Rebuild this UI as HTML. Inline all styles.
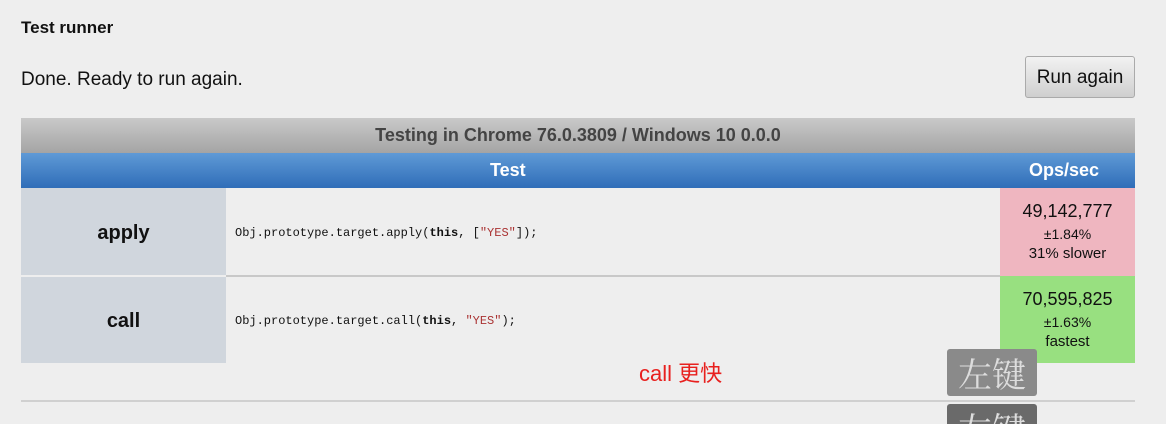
<!DOCTYPE html><html><head><meta charset="utf-8"><style>
html{overflow:hidden;height:424px}
body{margin:0;width:1166px;height:424px;background:#eeeeee;font-family:"Liberation Sans","Noto Sans CJK SC",sans-serif;position:relative;overflow:hidden;color:#111}
.a{position:absolute}
</style></head><body>
<div class="a" style="left:21px;top:18px;font-size:17px;font-weight:bold">Test runner</div>
<div class="a" style="left:21px;top:69px;font-size:19px">Done. Ready to run again.</div>
<div class="a" style="left:1025px;top:56px;width:110px;height:42px;border:1px solid #aaa;border-radius:3px;background:linear-gradient(#f2f2f2,#cfcfcf);font-size:19px;line-height:42px;text-align:center;box-sizing:border-box">Run again</div>
<div class="a" style="left:21px;top:118px;width:1114px;height:35px;background:linear-gradient(#c9c9c9,#a4a4a4);text-align:center;line-height:35px;font-size:18px;font-weight:bold;color:#444">Testing in Chrome 76.0.3809 / Windows 10 0.0.0</div>
<div class="a" style="left:21px;top:153px;width:1114px;height:35px;background:linear-gradient(#5f9ad6,#2f6db8);color:#fff;font-weight:bold;font-size:18px;line-height:35px">
<span class="a" style="left:469px">Test</span><span class="a" style="left:1008px">Ops/sec</span></div>
<div class="a" style="left:21px;top:188px;width:205px;height:87px;background:#d0d6dd;text-align:center;line-height:90px;font-weight:bold;font-size:20px">apply</div>
<div class="a" style="left:21px;top:277px;width:205px;height:86px;background:#d0d6dd;text-align:center;line-height:88px;font-weight:bold;font-size:20px">call</div>
<div class="a" style="left:226px;top:275px;width:774px;height:2px;background:#c8c8c8"></div>
<div class="a" style="left:235px;top:226px;font-family:'Liberation Mono',monospace;font-size:12px">Obj.prototype.target.apply(<b>this</b>, [<span style="color:#a33">"YES"</span>]);</div>
<div class="a" style="left:235px;top:314px;font-family:'Liberation Mono',monospace;font-size:12px">Obj.prototype.target.call(<b>this</b>, <span style="color:#a33">"YES"</span>);</div>
<div class="a" style="left:1000px;top:188px;width:135px;height:88px;background:#efb6c0;text-align:center">
<div style="font-size:18px;margin-top:13px">49,142,777</div><div style="font-size:14px;margin-top:4px">±1.84%</div><div style="font-size:15px;margin-top:3px">31% slower</div></div>
<div class="a" style="left:1000px;top:276px;width:135px;height:87px;background:#98e080;text-align:center">
<div style="font-size:18px;margin-top:13px">70,595,825</div><div style="font-size:14px;margin-top:4px">±1.63%</div><div style="font-size:15px;margin-top:3px">fastest</div></div>
<div class="a" style="left:639px;top:356px;color:#e8201e;font-size:22px">call 更快</div>
<div class="a" style="left:21px;top:400px;width:1114px;height:2px;background:#d0d0d0"></div>
<div class="a" style="left:947px;top:349px;width:90px;height:47px;background:#8a8a8a;border-radius:3px;color:#ddd;font-size:34px;line-height:47px;text-align:center;font-family:'Noto Serif CJK SC',serif">左键</div>
<div class="a" style="left:947px;top:404px;width:90px;height:20px;overflow:hidden;background:#6a6a6a;border-radius:3px 3px 0 0;color:#ddd;font-size:34px;line-height:47px;text-align:center;font-family:'Noto Serif CJK SC',serif">左键</div>
</body></html>
